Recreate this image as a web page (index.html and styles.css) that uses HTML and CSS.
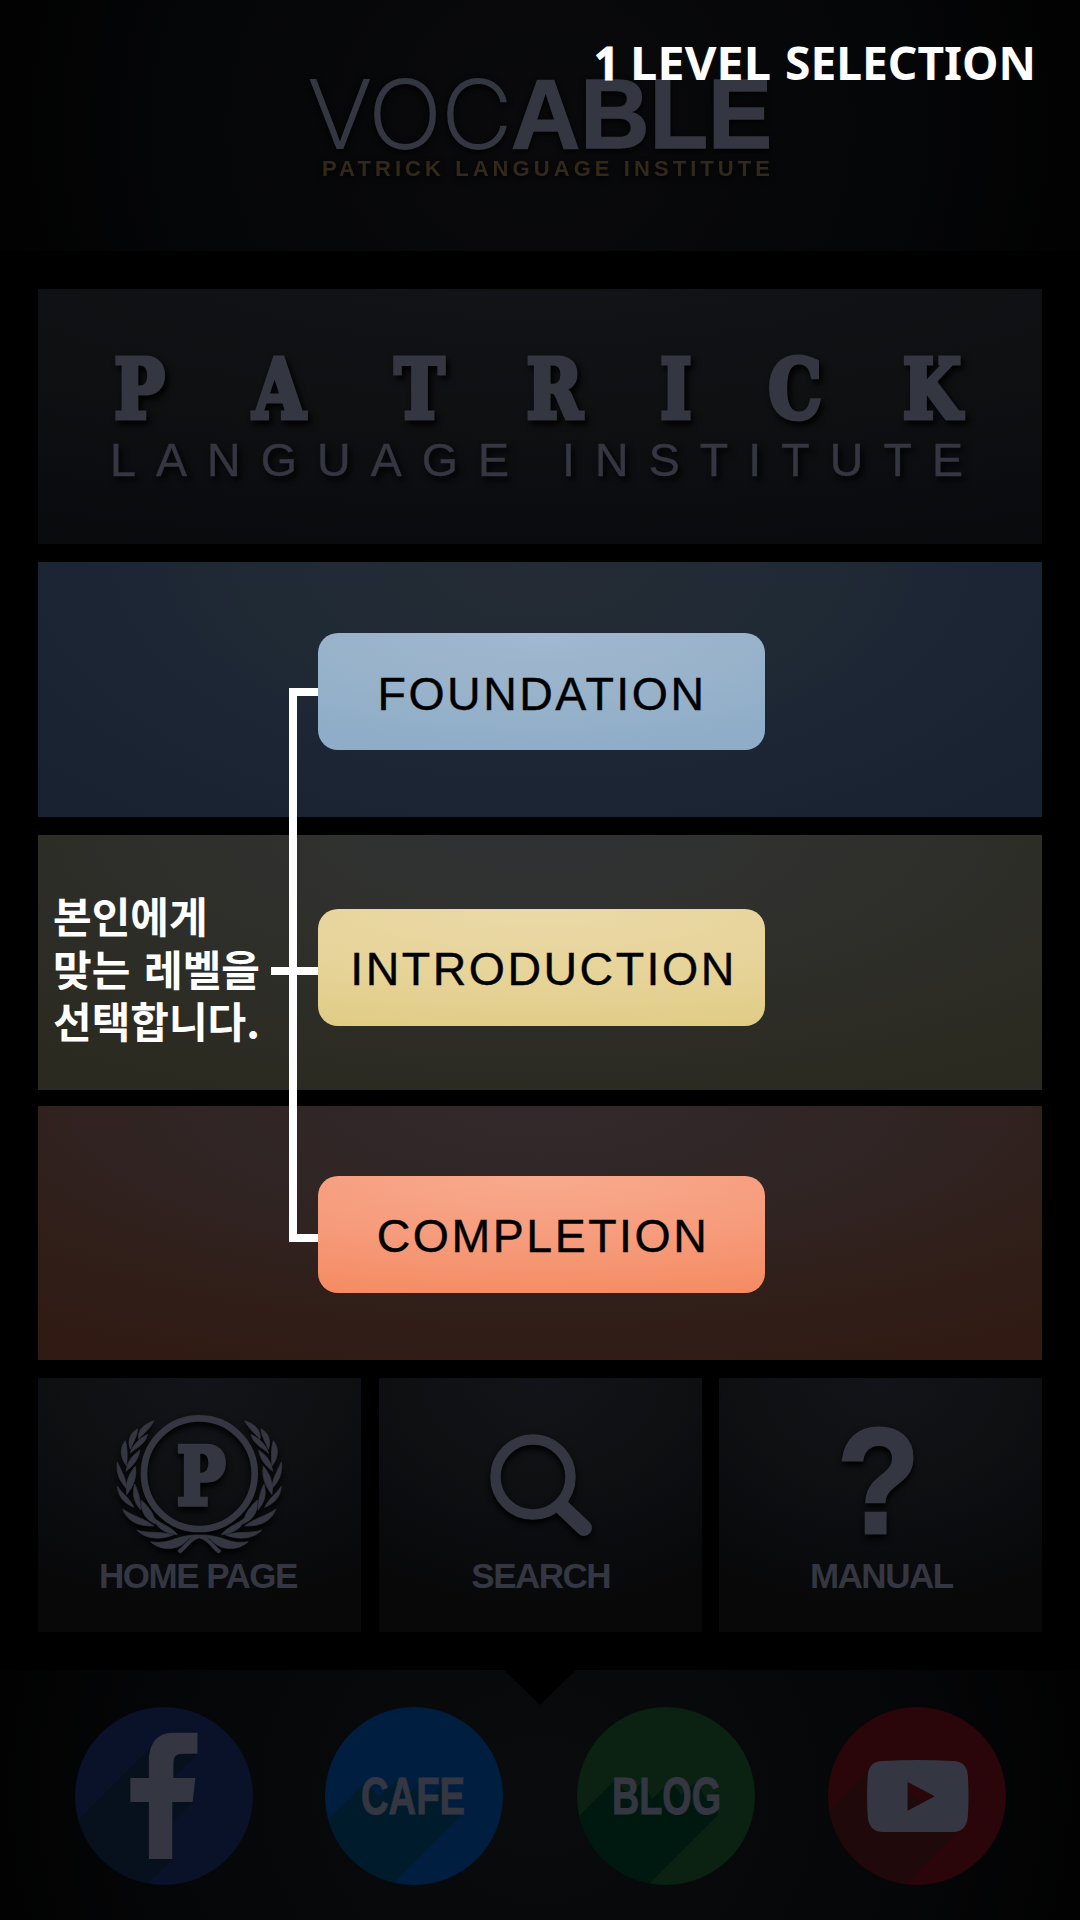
FILE: index.html
```html
<!DOCTYPE html>
<html lang="ko">
<head>
<meta charset="utf-8">
<title>VOCABLE</title>
<link rel="stylesheet" href="styles.css">
</head>
<body>
<div class="screen">
  <header class="header">
    <svg class="logo" viewBox="300 50 480 150" width="480" height="150">
      <text class="logo-thin" x="308" y="147.500" textLength="204" lengthAdjust="spacingAndGlyphs">VOC</text>
      <text class="logo-bold" x="511" y="148" textLength="261" lengthAdjust="spacingAndGlyphs">ABLE</text>
      <text class="logo-sub" x="322" y="176" textLength="448">PATRICK LANGUAGE INSTITUTE</text>
    </svg>
  </header>

  <main class="main">
    <section class="panel banner">
      <svg viewBox="38 289 1004 255" width="1004" height="255">
        <g transform="scale(.82 1)">
          <text class="banner-block" y="418.500" x="170.100 340.200 511.600 676.200 824.400 969.500 1136.600">PATRICK</text>
        </g>
        <text class="banner-light" x="110" y="476" textLength="853">LANGUAGE INSTITUTE</text>
      </svg>
    </section>

    <section class="panel level foundation"><button class="level-btn">FOUNDATION</button></section>
    <section class="panel level introduction"><button class="level-btn">INTRODUCTION</button></section>
    <section class="panel level completion"><button class="level-btn">COMPLETION</button></section>

    <nav class="tiles">
      <a class="tile home">
        <svg class="tile-icon" viewBox="75 108 507 450" width="169" height="150">
          <defs>
            <g id="laurel">
              <path d="M192 152C165 160 140 180 146 208C155 195 178 180 192 152Z"/>
              <path d="M143 176C118 190 112 215 121 238C130 215 142 200 143 176Z"/>
              <path d="M173 193C150 205 128 222 120 250C140 232 165 225 173 193Z"/>
              <path d="M106 212C90 230 88 262 110 288C112 262 114 240 106 212Z"/>
              <path d="M150 240C130 255 112 270 108 304C132 285 145 268 150 240Z"/>
              <path d="M82 276C78 305 85 330 110 356C110 325 92 300 82 276Z"/>
              <path d="M136 288C118 310 105 335 110 374C130 350 142 320 136 288Z"/>
              <path d="M82 348C84 380 102 400 132 412C120 385 95 370 82 348Z"/>
              <path d="M134 342C126 370 130 395 152 420C152 390 145 365 134 342Z"/>
              <path d="M98 417C110 450 140 470 192 468C165 445 130 440 98 417Z"/>
              <path d="M154 390C150 425 168 450 196 462C194 430 175 410 154 390Z"/>
              <path d="M140 480C165 506 205 512 250 495C210 482 175 492 140 480Z"/>
              <path d="M190 442C195 470 225 492 262 494C245 470 215 465 190 442Z"/>
              <path d="M181 515C215 545 265 542 292 510C300 500 315 502 328 502V495C250 494 250 524 181 515Z"/>
              <path d="M272 549C292 535 302 510 328 504V497C295 500 288 522 265 540Q262 548 272 549Z"/>
            </g>
          </defs>
          <g class="leaves">
            <use href="#laurel"/>
            <use href="#laurel" transform="matrix(-1 0 0 1 656 0)"/>
          </g>
          <circle class="ring" cx="328" cy="311" r="166"/>
          <text class="emblem-letter" x="261" y="402" textLength="145" lengthAdjust="spacingAndGlyphs">P</text>
        </svg>
        <span class="tile-label">HOME PAGE</span>
      </a>
      <a class="tile">
        <svg class="tile-icon" viewBox="456 1406 169 150" width="169" height="150">
          <circle class="lens" cx="533" cy="1477" r="37.500"/>
          <path class="handle" d="M562 1507L584 1528"/>
        </svg>
        <span class="tile-label">SEARCH</span>
      </a>
      <a class="tile">
        <svg class="tile-icon" viewBox="796 1406 169 150" width="169" height="150">
          <text class="question" x="837" y="1532.500" textLength="83" lengthAdjust="spacingAndGlyphs">?</text>
        </svg>
        <span class="tile-label">MANUAL</span>
      </a>
    </nav>
  </main>

  <footer class="footer">
    <a class="social facebook">
      <svg viewBox="0 0 178 178" width="178" height="178">
        <path class="cast" d="M79 37L-20 136L40 209L97.300 152V115L117.600 95L98.400 71L122.500 46.700Z"/>
        <path class="glyph" d="M122.500 25.700H97.700C82 25.700 73.900 37 73.900 54V71H55.300V95H73.900V152H97.300V95H117.600L120.400 71H98.400V55Q98.400 46.700 107.300 46.700H122.500Z"/>
      </svg>
    </a>
    <a class="social cafe">
      <svg viewBox="0 0 178 178" width="178" height="178">
        <path class="cast" d="M41 74L-20 135L40 205L138 107V97L128 107H118V76L104 90L96 98V74L80 90L71 73L54 90Z"/>
        <text class="social-text" x="36" y="107" textLength="104" lengthAdjust="spacingAndGlyphs">CAFE</text>
      </svg>
    </a>
    <a class="social blog">
      <svg viewBox="0 0 178 178" width="178" height="178">
        <path class="cast" d="M38 73L-20 131L40 209L141 108V84L130 94L120 74L104 88L94 74L75 92L66 74L52 88Z"/>
        <text class="social-text" x="35" y="107" textLength="109" lengthAdjust="spacingAndGlyphs">BLOG</text>
      </svg>
    </a>
    <a class="social youtube">
      <svg viewBox="0 0 178 178" width="178" height="178">
        <path class="cast" d="M42 62L-20 124L40 215L134 121Z"/>
        <path class="glyph" fill-rule="evenodd" d="M55 54Q90 52 125 54Q138.500 54 139.800 68Q141.300 89 139.800 110Q138.500 124.500 125 125H55Q41 124.500 39.800 110Q38.300 89 39.800 68Q41 54 55 54ZM79.600 75V103.700L106.800 89.300Z"/>
      </svg>
    </a>
  </footer>

  <svg class="step-title" viewBox="590 30 460 64" width="460" height="64">
    <text class="step-number" x="594" y="80" textLength="25" lengthAdjust="spacingAndGlyphs">1</text>
    <text x="630" y="80" textLength="141" lengthAdjust="spacingAndGlyphs">LEVEL</text>
    <text x="785" y="80" textLength="251" lengthAdjust="spacingAndGlyphs">SELECTION</text>
  </svg>
  <p class="note">본인에게<br>맞는 레벨을<br>선택합니다.</p>
  <svg class="connector" viewBox="271 688 47 554" width="47" height="554">
    <path d="M318 692H293V1238H318M271 971H318"/>
  </svg>
</div>
</body>
</html>
```
FILE: styles.css
```css
* { box-sizing: border-box; }

body {
  margin: 0;
  background: #000;
  font-family: "Liberation Sans", "Noto Sans CJK KR", sans-serif;
}

.screen {
  position: relative;
  display: flex;
  flex-direction: column;
  width: 1080px;
  height: 1920px;
  overflow: hidden;
  background: #000;
}

svg { display: block; overflow: visible; fill: #343741; }

.header {
  display: flex;
  justify-content: center;
  height: 251px;
  padding-top: 50px;
  background: radial-gradient(ellipse 540px 500px at 540px 125px, #0a0a0c, #050608 65%, #020202);
}

.logo { filter: drop-shadow(0 2px 3px #000); }
.logo-thin { font: 200 94px Inter, sans-serif; stroke: #343741; stroke-width: 1.800px; }
.logo-bold { font: bold 99px "Liberation Sans", sans-serif; stroke: #343741; stroke-width: 1.500px; }
.logo-sub { font: bold 22px "Liberation Sans", sans-serif; fill: #33291a; }

.main {
  display: flex;
  flex-direction: column;
  height: 1419px;
  padding: 38px 38px 0;
}

.panel { height: 255px; flex: none; }

.banner {
  margin-bottom: 18px;
  background: radial-gradient(ellipse 1300px 330px at 50% -40px, #131419, #0f1012 50%, #0b0d10 75%, #090a0c);
}
.banner svg { filter: drop-shadow(3px 4px 3px #000); }

.banner-block {
  font: bold 82px "DejaVu Serif", serif;
  text-anchor: middle;
  stroke: #343741;
  stroke-width: 5px;
}
.banner-light { font: 46.500px "Liberation Sans", sans-serif; stroke: #343741; stroke-width: .5px; }

.level { padding-left: 280px; }

.foundation {
  margin-bottom: 18px;
  padding-top: 71px;
  background: radial-gradient(ellipse 650px 330px at 50% 0, #242b35, #202a34 45%, #1d2635 60%, #192231);
}
.introduction {
  margin-bottom: 16px;
  padding-top: 74px;
  background: radial-gradient(ellipse 800px 290px at 50% 0, #2f3134, #30312f 30%, #2d2d27 65%, #2b2a20);
}
.completion {
  height: 254px;
  margin-bottom: 18px;
  padding-top: 70px;
  background: radial-gradient(ellipse 850px 280px at 50% 0, #33292c, #302423 48%, #301f1a 70%, #311a14);
}

.level-btn {
  display: flex;
  align-items: center;
  justify-content: center;
  width: 447px;
  height: 117px;
  padding: 4px 0 0 1px;
  border: 0;
  border-radius: 20px;
  font: 46.500px "Liberation Sans", sans-serif;
  letter-spacing: 2.500px;
  color: #000;
  -webkit-text-stroke: .4px #000;
}
.foundation .level-btn { background: radial-gradient(ellipse 400px 117px at 50% 0, #a0b8d0, #99b3cb 50%, #8fadc8); }
.introduction .level-btn { padding: 2px 0 0 4px; background: radial-gradient(ellipse 600px 125px at 50% 0, #ebd9a8, #e7d49a 50%, #e1cc86); }
.completion .level-btn { padding: 3px 0 0 3px; background: radial-gradient(ellipse 600px 125px at 50% 0, #f8aa8d, #f69c7c 50%, #f58b62); }

.tiles {
  display: grid;
  grid-template-columns: repeat(3, 1fr);
  gap: 17.500px;
  height: 254px;
}

.tile {
  display: flex;
  flex-direction: column;
  align-items: center;
  padding-top: 28px;
  background: radial-gradient(ellipse 300px 230px at 50% 0, #131419, #0f1012 45%, #0b0d10 65%, #080809);
}
.tile-icon { filter: drop-shadow(0 4px 3px #000); }
.tile-label {
  padding-left: 1.500px;
  font-weight: bold;
  font-size: 35px;
  line-height: 40px;
  letter-spacing: -1.500px;
  color: #343741;
}
.home .tile-label { padding: 0 3px 0 0; }

.leaves { stroke: #343741; stroke-width: 2; }
.ring { fill: none; stroke: #343741; stroke-width: 20; }
.emblem-letter { font: bold 237px "DejaVu Serif", serif; stroke: #343741; stroke-width: 16; }
.lens { fill: none; stroke: #343741; stroke-width: 10.500; }
.handle { stroke: #343741; stroke-width: 16; stroke-linecap: round; }
.question { font: bold 151px "Liberation Sans", sans-serif; stroke: #343741; stroke-width: 3px; }

.footer {
  display: flex;
  gap: 73.300px;
  height: 250px;
  padding: 37px 0 0 74.500px;
  background: radial-gradient(ellipse 560px 500px at 540px 125px, #0a0b0d, #060709 60%, #020202);
  clip-path: polygon(0 0, 504px 0, 540px 35px, 576px 0, 100% 0, 100% 100%, 0 100%);
}

.social {
  width: 178px;
  height: 178px;
  border-radius: 50%;
  overflow: hidden;
}
.social-text {
  font: bold 51px "Liberation Sans", sans-serif;
  stroke: #343741;
  stroke-width: 1px;
}
.facebook { background: #0a1229; }
.facebook .cast { fill: #07101d; }
.cafe { margin: 0 1px 0 -1px; background: #001f40; }
.cafe .cast { fill: #001b2c; }
.blog { background: #0b2213; }
.blog .cast { fill: #001910; }
.youtube { background: #2a060a; }
.youtube .cast { fill: #20090b; }

/* Tutorial layer over the dimmed menu */
.step-title {
  position: absolute;
  left: 590px;
  top: 30px;
  fill: #fff;
  font: bold 46px "Noto Sans", sans-serif;
}
.step-number { stroke: #fff; stroke-width: 1px; }
.note {
  position: absolute;
  left: 53px;
  top: 889px;
  margin: 0;
  font: bold 42px/52.500px "Noto Sans CJK KR", sans-serif;
  word-spacing: 2px;
  color: #fff;
  white-space: nowrap;
}
.connector {
  position: absolute;
  left: 271px;
  top: 688px;
}
.connector path { fill: none; stroke: #fff; stroke-width: 8; }
```
